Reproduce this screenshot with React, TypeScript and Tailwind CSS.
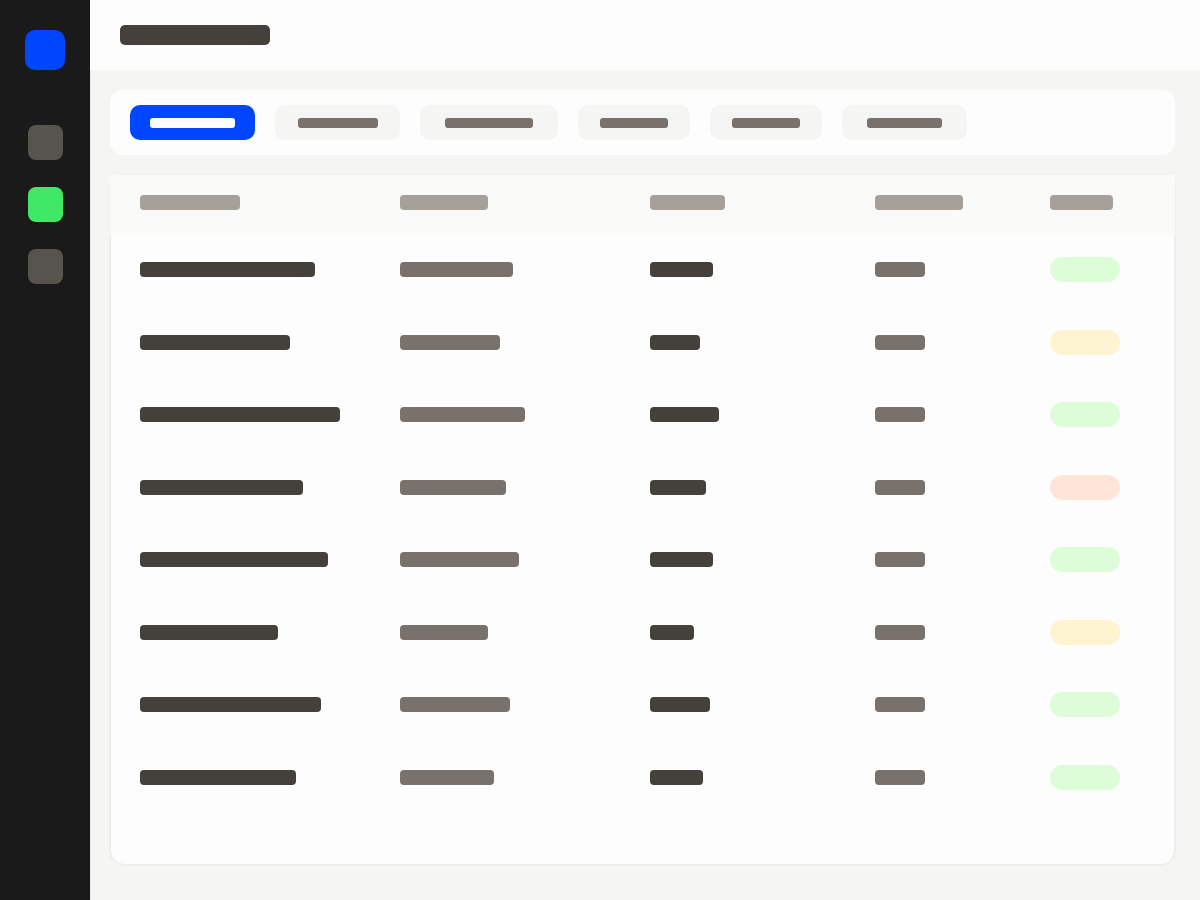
import type { ReactNode } from "react";
import clsx from "clsx";

const NAV_ITEMS = [
  { label: "Overview", active: false },
  { label: "Records", active: true },
  { label: "Settings", active: false },
];

const FILTERS = [
  { label: "Filter 1", size: "w-[125px]", bar: "w-[85px]", active: true },
  { label: "Filter 2", size: "w-[125px]", bar: "w-20", active: false },
  { label: "Filter 3", size: "w-[138px]", bar: "w-[88px]", active: false },
  { label: "Filter 4", size: "w-[112px]", bar: "w-[68px]", active: false },
  { label: "Filter 5", size: "w-[112px]", bar: "w-[68px]", active: false },
  { label: "Filter 6", size: "w-[125px]", bar: "w-[75px]", active: false },
];

const COLUMNS = [
  { label: "Name", col: "w-[290px]", bar: 100 },
  { label: "Category", col: "w-[250px]", bar: 88 },
  { label: "Amount", col: "w-[225px]", bar: 75 },
  { label: "Date", col: "w-[175px]", bar: 88 },
  { label: "Status", col: "w-[125px]", bar: 63 },
];

const STATUS_TONES = {
  ok: "bg-[#ddfdd9]",
  pending: "bg-[#fff3d0]",
  failed: "bg-[#ffe5d8]",
};

type Row = {
  name: number;
  category: number;
  amount: number;
  date: number;
  status: keyof typeof STATUS_TONES;
};

// Placeholder bar widths, in pixels
const ROWS: Row[] = [
  { name: 175, category: 113, amount: 63, date: 50, status: "ok" },
  { name: 150, category: 100, amount: 50, date: 50, status: "pending" },
  { name: 200, category: 125, amount: 69, date: 50, status: "ok" },
  { name: 163, category: 106, amount: 56, date: 50, status: "failed" },
  { name: 188, category: 119, amount: 63, date: 50, status: "ok" },
  { name: 138, category: 88, amount: 44, date: 50, status: "pending" },
  { name: 181, category: 110, amount: 60, date: 50, status: "ok" },
  { name: 156, category: 94, amount: 53, date: 50, status: "ok" },
];

function Bar({ width, tone }: { width: number; tone: string }) {
  return <div className={clsx("h-[15px] rounded", tone)} style={{ width }} />;
}

function Cell({ children }: { children: ReactNode }) {
  return (
    <td className="p-0 pt-[22px] align-top first:pl-[30px]">
      <div className="flex h-[25px] items-center">{children}</div>
    </td>
  );
}

function Sidebar() {
  return (
    <aside className="flex w-[90px] shrink-0 flex-col items-center bg-[#1a1a1a] pt-[30px]">
      <a href="#" aria-label="Home" className="block size-10 rounded-[10px] bg-[#0045ff]" />
      <nav className="mt-[55px] flex flex-col gap-[27px]">
        {NAV_ITEMS.map((item) => (
          <a
            key={item.label}
            href="#"
            aria-label={item.label}
            className={clsx("block size-[35px] rounded-lg", item.active ? "bg-[#40e868]" : "bg-[#57534e]")}
          />
        ))}
      </nav>
    </aside>
  );
}

function FilterBar() {
  return (
    <div className="flex flex-wrap gap-5 rounded-[13px] bg-[#fdfdfd] px-5 py-[15px]">
      {FILTERS.map((filter) => (
        <button
          key={filter.label}
          type="button"
          aria-label={filter.label}
          className={clsx(
            "flex h-[35px] items-center justify-center rounded-[10px]",
            filter.size,
            filter.active ? "bg-[#0045ff]" : "bg-[#f5f5f4]"
          )}
        >
          <span className={clsx("h-[10px] rounded-[3px]", filter.bar, filter.active ? "bg-[#fdfdfd]" : "bg-[#78716c]")} />
        </button>
      ))}
    </div>
  );
}

function RecordsTable() {
  return (
    <section className="rounded-[14px] border border-[#ececeb] bg-[#fdfdfd] pb-[49px] ring-1 ring-[#efefee]">
      <div className="-mx-px -mt-px">
        <table className="w-full table-fixed border-collapse">
          <thead className="bg-[#fafaf9]">
            <tr className="h-[60px]">
              {COLUMNS.map((column) => (
                <th
                  key={column.label}
                  scope="col"
                  aria-label={column.label}
                  className={clsx("p-0 pt-5 align-top first:pl-[30px]", column.col)}
                >
                  <Bar width={column.bar} tone="bg-[#a6a09b]" />
                </th>
              ))}
            </tr>
          </thead>
          <tbody>
            {ROWS.map((row, i) => (
              <tr key={i} className="odd:h-[73px] even:h-[72px]">
                <Cell>
                  <Bar width={row.name} tone="bg-[#44403b]" />
                </Cell>
                <Cell>
                  <Bar width={row.category} tone="bg-[#79716b]" />
                </Cell>
                <Cell>
                  <Bar width={row.amount} tone="bg-[#44403b]" />
                </Cell>
                <Cell>
                  <Bar width={row.date} tone="bg-[#79716b]" />
                </Cell>
                <Cell>
                  <div className={clsx("h-[25px] w-[70px] rounded-full", STATUS_TONES[row.status])} />
                </Cell>
              </tr>
            ))}
          </tbody>
        </table>
      </div>
    </section>
  );
}

export default function App() {
  return (
    <div className="flex min-h-screen bg-[#f5f5f4] font-['Inter',sans-serif]">
      <Sidebar />
      <div className="flex min-w-0 flex-1 flex-col">
        <header className="flex h-[70px] items-center bg-[#fdfdfd] px-[30px]">
          <div className="h-5 w-[150px] rounded-[5px] bg-[#44403b]" />
        </header>
        <main className="flex flex-1 flex-col gap-5 border-l border-[#e8e8e7] pt-5 pr-[25px] pb-5 pl-[19px]">
          <FilterBar />
          <RecordsTable />
        </main>
      </div>
    </div>
  );
}
